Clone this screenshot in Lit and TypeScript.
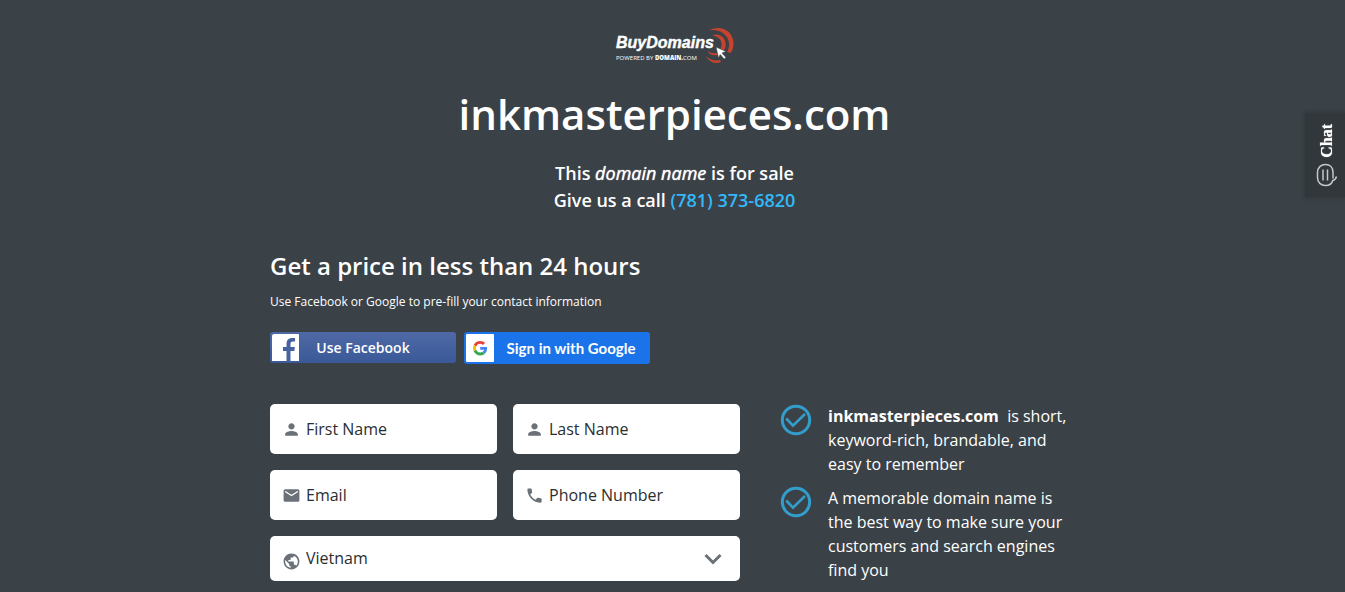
import { LitElement, html, svg, css } from "lit";
import { customElement, property } from "lit/decorators.js";

const icons = {
  person: svg`<path d="M12 12c2.21 0 4-1.79 4-4s-1.79-4-4-4-4 1.79-4 4 1.79 4 4 4zm0 2c-2.67 0-8 1.34-8 4v2h16v-2c0-2.66-5.33-4-8-4z"/>`,
  mail: svg`<path d="M20 4H4c-1.1 0-1.99.9-1.99 2L2 18c0 1.1.9 2 2 2h16c1.1 0 2-.9 2-2V6c0-1.1-.9-2-2-2zm0 4l-8 5-8-5V6l8 5 8-5v2z"/>`,
  phone: svg`<path d="M6.62 10.79c1.44 2.83 3.76 5.14 6.59 6.59l2.2-2.2c.27-.27.67-.36 1.02-.24 1.12.37 2.33.57 3.57.57.55 0 1 .45 1 1V20c0 .55-.45 1-1 1-9.39 0-17-7.61-17-17 0-.55.45-1 1-1h3.5c.55 0 1 .45 1 1 0 1.25.2 2.45.57 3.57.11.35.03.74-.25 1.02l-2.2 2.2z"/>`,
  globe: svg`<path d="M12 2C6.48 2 2 6.48 2 12s4.48 10 10 10 10-4.48 10-10S17.52 2 12 2zm-1 17.93c-3.95-.49-7-3.85-7-7.93 0-.62.08-1.21.21-1.79L9 15v1c0 1.1.9 2 2 2v1.93zm6.9-2.54c-.26-.81-1-1.39-1.9-1.39h-1v-3c0-.55-.45-1-1-1H8v-2h2c.55 0 1-.45 1-1V7h2c1.1 0 2-.9 2-2v-.41c2.93 1.19 5 4.06 5 7.41 0 2.08-.8 3.97-2.1 5.39z"/>`,
};

@customElement("text-field")
class TextField extends LitElement {
  @property() label = "";
  @property() type = "text";
  @property() icon: keyof typeof icons = "person";

  static styles = css`
    :host { display: block; min-width: 0; }
    .field {
      display: flex;
      align-items: center;
      gap: 5px;
      height: 50px;
      padding: 0 12px;
      box-sizing: border-box;
      background: #fff;
      border-radius: 5px;
    }
    .icon { flex: none; width: 19px; height: 19px; fill: #6b7178; }
    .input {
      flex: 1;
      min-width: 0;
      padding: 0;
      border: 0;
      outline: 0;
      background: none;
      font: 400 16px/24px "Open Sans", sans-serif;
      color: #2b2e31;
    }
    .input::placeholder { color: #2b2e31; opacity: 1; }
  `;

  render() {
    return html`<label class="field">
      <svg class="icon" viewBox="0 0 24 24" aria-hidden="true">${icons[this.icon]}</svg>
      <input class="input" type=${this.type} placeholder=${this.label} aria-label=${this.label} />
    </label>`;
  }
}

@customElement("check-item")
class CheckItem extends LitElement {
  static styles = css`
    :host { display: flex; gap: 16px; align-items: flex-start; }
    .icon { flex: none; width: 32px; height: 32px; fill: none; stroke: #339dcc; stroke-width: 3; }
    .text { flex: 1; }
  `;
  render() {
    return html`<svg class="icon" viewBox="0 0 32 32" aria-hidden="true">
        <circle cx="16" cy="16" r="13.7" />
        <path stroke-width="2.6" d="M6.200 14.500l6.800 7.200L25 10" />
      </svg>
      <div class="text"><slot></slot></div>`;
  }
}

@customElement("app-root")
class AppRoot extends LitElement {
  static styles = css`
    :host {
      display: block;
      min-height: 100vh;
      box-sizing: border-box;
      padding: 27px 0 11px 4px;
      background: #3b4247;
      color: #fff;
      font: 400 16px/24px "Open Sans", sans-serif;
    }
    .page { max-width: 809px; margin: 0 auto; }
    .header { display: flex; flex-direction: column; align-items: center; text-align: center; }
    .logo { display: block; width: 120px; height: 38px; }
    .brand { font: italic 700 16px "Liberation Sans", sans-serif; fill: #fff; stroke: #fff; stroke-width: .4; }
    .powered { font: 500 6px "Open Sans", sans-serif; fill: #fff; }
    .powered-strong { font-weight: 800; }
    .domain { margin: 19px 0 0; font-size: 42px; line-height: 60px; font-weight: 600; }
    .pitch { margin: 16px 0 0; font-size: 18px; line-height: 27px; font-weight: 600; }
    .emphasis { font-weight: 400; text-shadow: 0 0 1px #fff; }
    .phone { color: #33b9fb; text-decoration: none; }
    .heading { margin: 36px 0 0; font-size: 24px; line-height: 32px; font-weight: 600; }
    .note { margin: 11px 0 0; font-size: 12px; line-height: 18px; }
    .social { display: flex; gap: 8px; margin-top: 21px; }
    .social-button {
      display: flex;
      align-items: center;
      width: 186px;
      height: 32px;
      padding: 2px;
      border: 0;
      border-radius: 3px;
      color: #fff;
      cursor: pointer;
    }
    .facebook {
      height: 31px;
      background: linear-gradient(#4e69a5, #3b5998);
      font: 600 14px/20px "Open Sans", sans-serif;
    }
    .google { background: #1a73e8; font: 700 15px/20px Lato, sans-serif; }
    .social-icon { flex: none; width: 28px; height: 28px; border-radius: 1px; }
    .social-label { flex: 1; text-align: center; }
    .facebook .social-label { padding-right: 28px; }
    .columns {
      display: grid;
      grid-template-columns: minmax(0, 470fr) minmax(0, 299fr);
      gap: 40px;
      margin-top: 40px;
      align-items: start;
    }
    .form { display: grid; grid-template-columns: repeat(2, minmax(0, 1fr)); gap: 16px; }
    .country {
      grid-column: 1 / -1;
      display: grid;
      align-items: center;
      height: 45px;
      background: #fff;
      border-radius: 5px;
    }
    .select {
      grid-area: 1 / 1;
      width: 100%;
      height: 45px;
      padding: 0 48px 2px 36px;
      border: 0;
      border-radius: 5px;
      appearance: none;
      background: none;
      font: 400 16px/24px "Open Sans", sans-serif;
      color: #2b2e31;
    }
    .globe { grid-area: 1 / 1; width: 19px; height: 19px; margin: 6px 0 0 12px; fill: #6b7178; }
    .chevron {
      grid-area: 1 / 1;
      justify-self: end;
      width: 18px;
      height: 12px;
      margin-right: 18px;
      fill: none;
      stroke: #6b7178;
      stroke-width: 3;
      pointer-events: none;
    }
    .benefits { display: flex; flex-direction: column; gap: 10px; padding-right: 8px; }
    .chat {
      position: fixed;
      right: 0;
      top: 113px;
      display: flex;
      flex-direction: column;
      align-items: center;
      justify-content: center;
      gap: 6px;
      width: 40px;
      height: 84px;
      padding: 1px 0 0 4px;
      border: 0;
      background: #32373b;
      box-shadow: 0 0 5px rgba(0, 0, 0, 0.25);
      color: #fff;
      font: 700 16px/18px "Liberation Serif", serif;
      cursor: pointer;
    }
    .chat-label { writing-mode: vertical-rl; transform: rotate(180deg); text-shadow: 0 0 1px #fff; }
    .chat-icon { width: 22px; height: 24px; fill: none; stroke: #c5c8ca; stroke-width: 1.5; }
  `;

  render() {
    return html`
      <main class="page">
        <header class="header">
          <svg class="logo" viewBox="0 0 120 38" role="img" aria-label="BuyDomains, powered by Domain.com">
            <g fill="#c8432f">
              <path d="M94 3.500C106-3 119 4 118.500 18q-.5 5-3 8l-3.500-1c3-5 3-11-1-16-4-5-10-7-17-5.500z" />
              <path d="M97 8c8-2.500 15 3 13.500 12l-2 4.500-3-2.500c3-6 .5-12-8.500-14z" />
              <path d="M90.500 28.500q6 6.500 14.500 4.500l1 2q-10 3.500-15.500-6.500z" />
              <path d="M92.500 24q4 3 9 2l1 2q-7 1.500-10-4z" />
            </g>
            <text class="brand" x="1" y="21">BuyDomains</text>
            <text class="powered" x="1" y="33">POWERED BY <tspan class="powered-strong">DOMAIN.</tspan>COM</text>
            <path fill="#fff" stroke="#3b4247" stroke-width=".6" d="M101 20l10 4.500-4 1.500 4 4.500-1.800 1.600-4-4.500-1.700 3.400z" />
          </svg>
          <h1 class="domain">inkmasterpieces.com</h1>
          <p class="pitch">
            This <em class="emphasis">domain name</em> is for sale<br />
            Give us a call <a class="phone" href="tel:+17813736820">(781) 373-6820</a>
          </p>
        </header>

        <h2 class="heading">Get a price in less than 24 hours</h2>
        <p class="note">Use Facebook or Google to pre-fill your contact information</p>

        <div class="social">
          <button class="social-button facebook" type="button">
            <svg class="social-icon" viewBox="0 0 28 28" aria-hidden="true">
              <path fill="#fff" d="M2 0h24q1 0 1 1v26H0V2q0-2 2-2z" />
              <path fill="#4762a0" d="M14.500 28V17h-3.500v-4h3.500v-3c0-4 2.300-6 5.800-6h2.700v3.600h-2c-2 0-2.500 1-2.500 2.500V13h4.400l-.6 4H18.500v11z" />
            </svg>
            <span class="social-label">Use Facebook</span>
          </button>
          <button class="social-button google" type="button">
            <svg class="social-icon" viewBox="0 0 28 28" aria-hidden="true">
              <path fill="#fff" d="M0 0h28v28H0z" />
              <g transform="translate(7 7) scale(.3)">
                <path fill="#ea4335" d="M24 9.500c3.540 0 6.710 1.220 9.210 3.600l6.850-6.850C35.900 2.380 30.470 0 24 0 14.620 0 6.510 5.380 2.560 13.220l7.980 6.190C12.430 13.720 17.740 9.500 24 9.500z" />
                <path fill="#4285f4" d="M46.980 24.550c0-1.570-.15-3.090-.38-4.550H24v9.020h12.940c-.58 2.960-2.260 5.480-4.780 7.180l7.730 6c4.510-4.180 7.090-10.360 7.090-17.650z" />
                <path fill="#fbbc05" d="M10.530 28.590c-.48-1.450-.76-2.990-.76-4.590s.27-3.140.76-4.590l-7.980-6.190C.92 16.460 0 20.120 0 24c0 3.880.92 7.540 2.560 10.780l7.970-6.190z" />
                <path fill="#34a853" d="M24 48c6.480 0 11.930-2.130 15.890-5.810l-7.730-6c-2.150 1.450-4.920 2.300-8.160 2.300-6.260 0-11.570-4.220-13.470-9.910l-7.980 6.190C6.510 42.620 14.620 48 24 48z" />
              </g>
            </svg>
            <span class="social-label">Sign in with Google</span>
          </button>
        </div>

        <div class="columns">
          <form class="form">
            <text-field label="First Name" icon="person"></text-field>
            <text-field label="Last Name" icon="person"></text-field>
            <text-field label="Email" type="email" icon="mail"></text-field>
            <text-field label="Phone Number" type="tel" icon="phone"></text-field>
            <label class="country">
              <select class="select" aria-label="Country">
                <option>Vietnam</option>
              </select>
              <svg class="globe" viewBox="0 0 24 24" aria-hidden="true">${icons.globe}</svg>
              <svg class="chevron" viewBox="0 0 18 12" aria-hidden="true"><path d="M1.500 2L9 9.500 16.500 2" /></svg>
            </label>
          </form>
          <div class="benefits">
            <check-item><strong>inkmasterpieces.com</strong> &nbsp;is short, keyword-rich, brandable, and easy to remember</check-item>
            <check-item>A memorable domain name is the best way to make sure your customers and search engines find you</check-item>
          </div>
        </div>
      </main>

      <button class="chat" type="button">
        <span class="chat-label">Chat</span>
        <svg class="chat-icon" viewBox="0 0 22 24" aria-hidden="true">
          <path d="M17 15.500V9.500C17 4.500 14 1.500 9.500 1.500S1.500 4.500 1.500 9.500v5c0 5 3.500 8 8 8 4 0 6.500-2 7.200-5 2-.5 3.300-2 3.800-4" />
          <path d="M7 6.500v11M11.500 6.500v11" />
        </svg>
      </button>
    `;
  }
}
